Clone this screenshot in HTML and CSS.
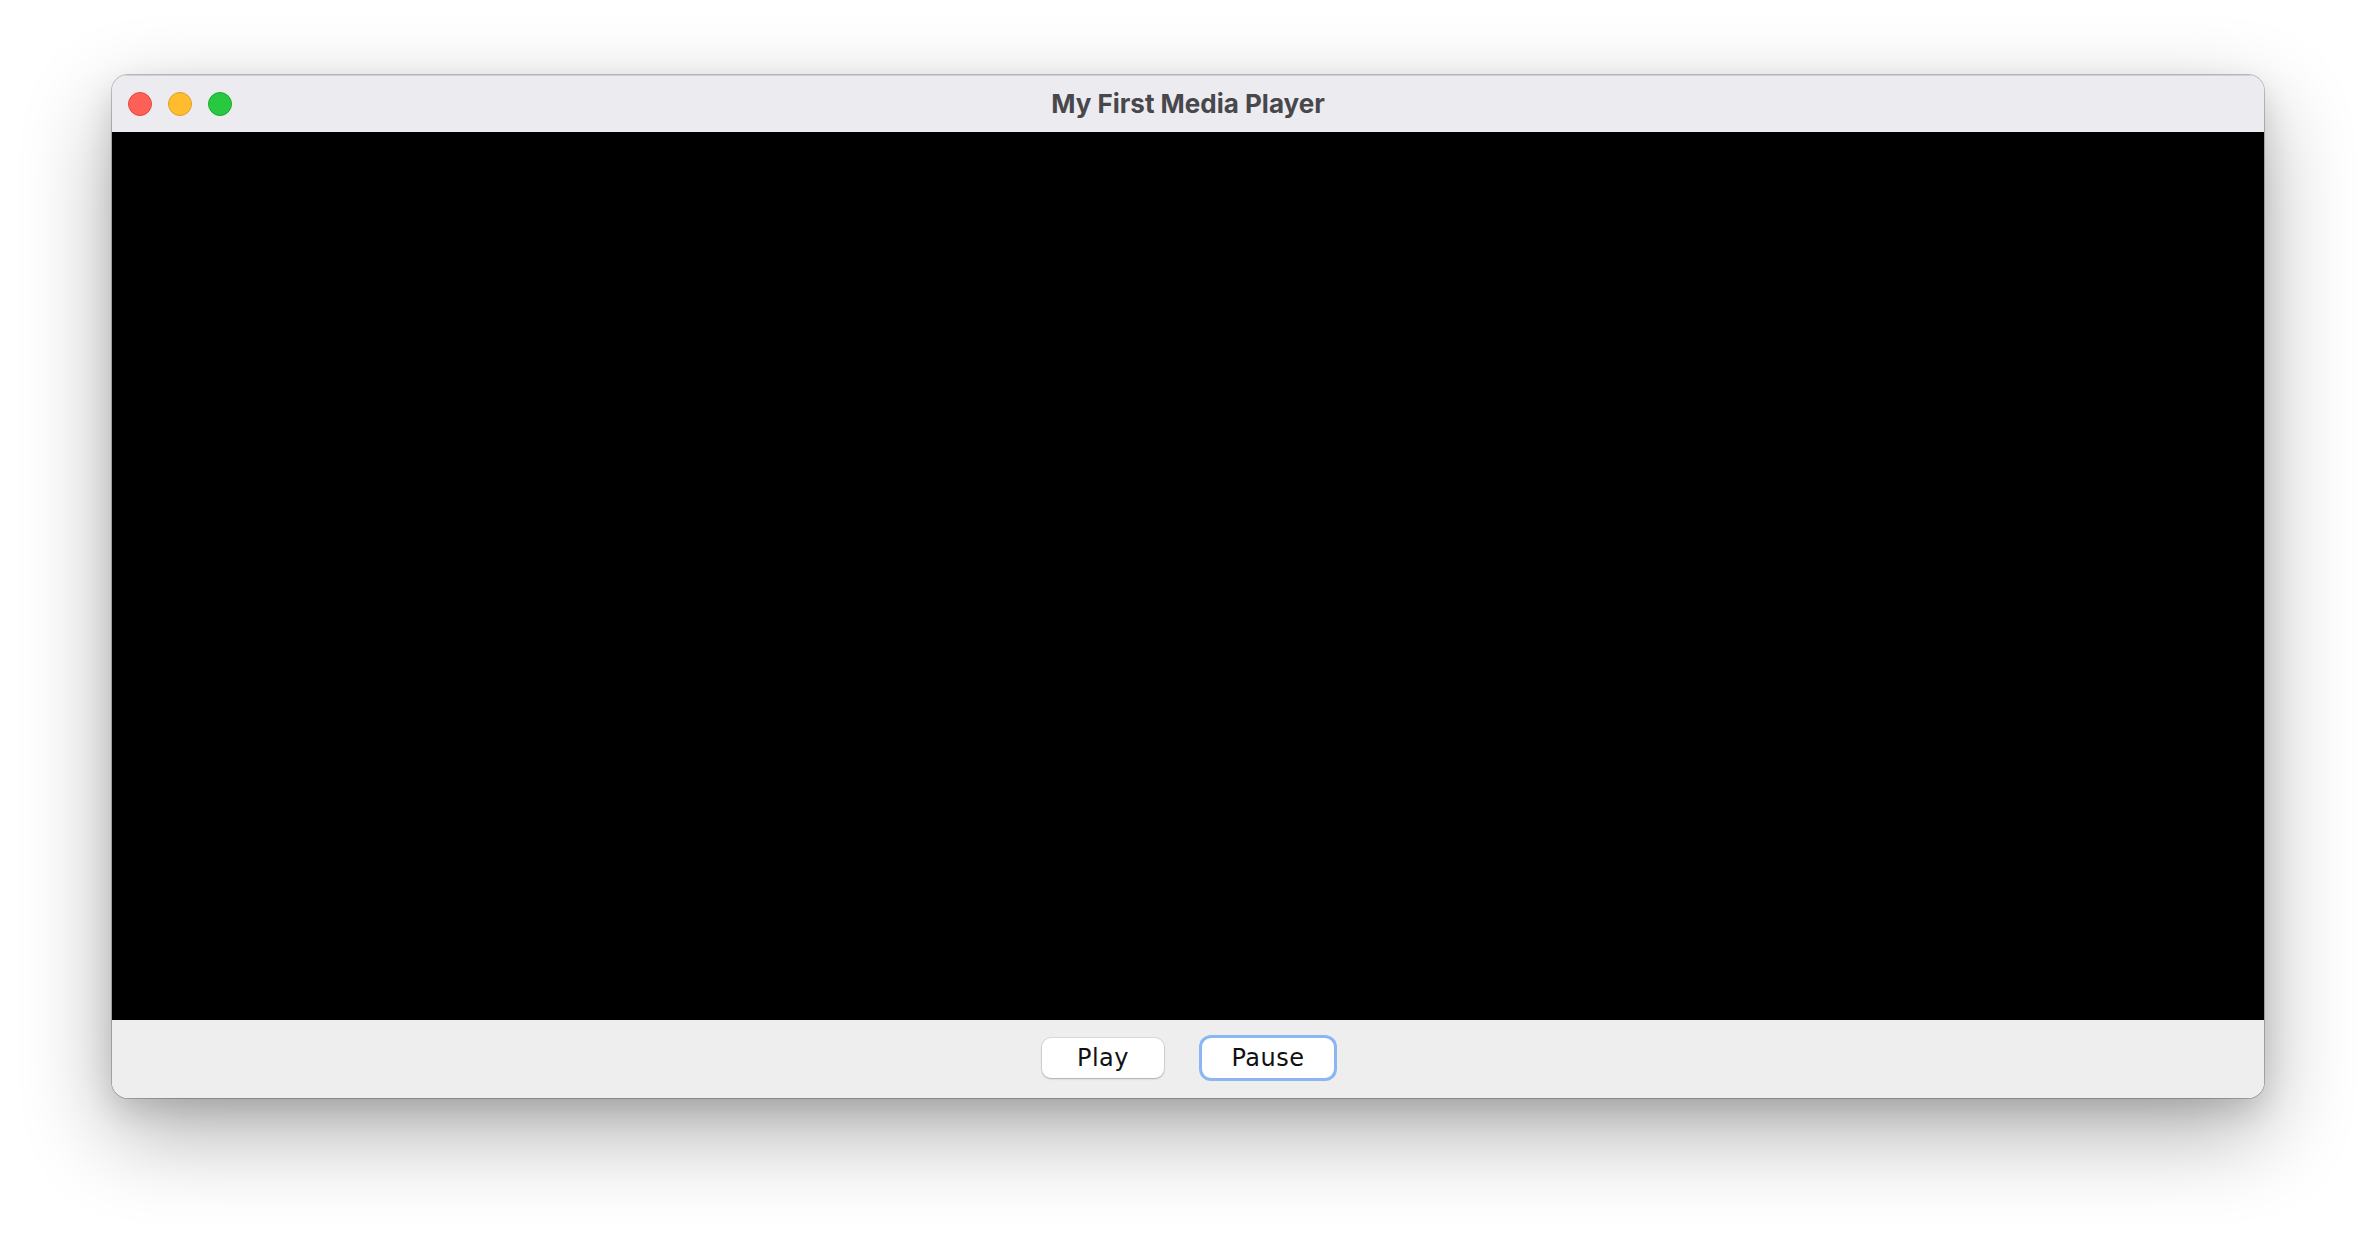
FILE: index.html
```html
<!DOCTYPE html>
<html>
<head>
<meta charset="utf-8">
<title>My First Media Player</title>
<link rel="stylesheet" href="styles.css">
</head>
<body>
<div class="stage">
  <div class="window">
    <div class="titlebar">
      <div class="lights">
        <span class="light red"></span>
        <span class="light yellow"></span>
        <span class="light green"></span>
      </div>
      <div class="title">My First Media Player</div>
    </div>
    <div class="video"></div>
    <div class="controls">
      <button class="btn play">Play</button>
      <button class="btn focused">Pause</button>
    </div>
  </div>
</div>
</body>
</html>
```
FILE: styles.css
```css
html, body {
  margin: 0;
  padding: 0;
  background: #ffffff;
  width: 2376px;
  height: 1246px;
  overflow: hidden;
}
.stage {
  padding: 75px 0 0 112px;
}
.window {
  width: 2152px;
  height: 1023px;
  border-radius: 16px;
  overflow: hidden;
  display: flex;
  flex-direction: column;
  box-shadow: 0 0 0 1px rgba(0,0,0,0.22), 0 34px 90px rgba(0,0,0,0.32), 0 12px 30px rgba(0,0,0,0.12);
}
.titlebar {
  height: 57px;
  flex: none;
  background: #ecebf0;
  display: flex;
  align-items: center;
  position: relative;
  border-top: 1px solid #d0d0d4;
  box-sizing: border-box;
}
.lights {
  display: flex;
  gap: 16px;
  padding-left: 16px;
  padding-bottom: 1px;
}
.light {
  width: 22px;
  height: 22px;
  border-radius: 50%;
  border: 1px solid rgba(0,0,0,0.12);
}
.red { background: #fe5f57; border-color: #e14942; }
.yellow { background: #febc2e; border-color: #dfa023; }
.green { background: #28c840; border-color: #1aab29; }
.title {
  position: absolute;
  left: 0;
  right: 0;
  top: 0;
  bottom: 0;
  display: flex;
  align-items: center;
  justify-content: center;
  font-family: Inter, "Liberation Sans", sans-serif;
  font-weight: 700;
  font-size: 26px;
  color: #48474c;
  padding-bottom: 2px;
}
.video {
  height: 888px;
  flex: none;
  background: #000000;
}
.controls {
  flex: 1;
  background: #eeeeee;
  display: flex;
  justify-content: center;
  align-items: flex-start;
  gap: 38px;
  padding-top: 18px;
}
.btn {
  height: 40px;
  background: #ffffff;
  border: none;
  border-radius: 9px;
  font-family: "DejaVu Sans", sans-serif;
  font-size: 24px;
  color: #111111;
  letter-spacing: 0.5px;
  padding: 0;
  box-shadow: 0 0 0 1px rgba(0,0,0,0.08), 0 1px 2px rgba(0,0,0,0.22);
}
.btn.play {
  width: 122px;
}
.btn.focused {
  width: 132px;
  box-shadow: 0 0 0 3px #8ab7f2, 0 1px 2px rgba(0,0,0,0.2);
}
```
